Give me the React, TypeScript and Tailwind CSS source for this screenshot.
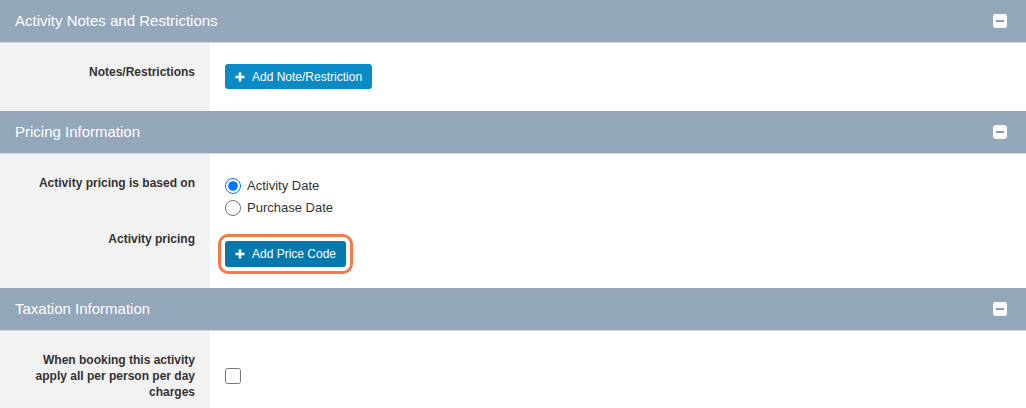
import React from "react";

function Plus() {
  return (
    <svg width="10" height="10" viewBox="0 0 10 10" className="shrink-0">
      <path d="M5 0.5v9M0.5 5h9" stroke="white" strokeWidth="2.6" />
    </svg>
  );
}

function Header({ title }: { title: string }) {
  return (
    <div className="flex h-[43px] items-center justify-between border-b border-[#d3d7dc] bg-[#94a6b9] pl-[15px] pr-[19px]">
      <span className="text-[15px] text-white">{title}</span>
      <span className="flex h-[14px] w-[14px] items-center justify-center rounded-[3px] bg-white">
        <span className="h-[2px] w-[8px] bg-[#8a9bb0]" />
      </span>
    </div>
  );
}

function Label({ children, className = "" }: { children: React.ReactNode; className?: string }) {
  return (
    <div className={`bg-[#f2f2f2] pr-[15px] text-right text-[12px] font-bold leading-[16px] text-[#333] ${className}`}>
      {children}
    </div>
  );
}

function Btn({ children, className = "" }: { children: React.ReactNode; className?: string }) {
  return (
    <button className={`flex items-center gap-[7px] rounded-[3px] pl-[10px] pr-[10px] text-[12px] text-white ${className}`}>
      <Plus />
      <span>{children}</span>
    </button>
  );
}

export default function App() {
  return (
    <div className="h-[408px] w-[1026px] overflow-hidden bg-white" style={{ fontFamily: '"Liberation Sans", Arial, sans-serif' }}>
      <Header title="Activity Notes and Restrictions" />
      <div className="grid grid-cols-[210px_1fr]">
        <Label className="pt-[21px]">Notes/Restrictions</Label>
        <div className="pb-[22px] pl-[15px] pt-[21px]">
          <Btn className="h-[25px] bg-[#0a8bc6]">Add Note/Restriction</Btn>
        </div>
      </div>

      <Header title="Pricing Information" />
      <div className="grid grid-cols-[210px_1fr]">
        <Label className="pt-[21px]">Activity pricing is based on</Label>
        <div className="flex flex-col pl-[15px] pt-[21px] text-[13px] text-[#333]">
          <label className="flex h-[22px] items-center gap-[6px]">
            <input type="radio" name="p" defaultChecked className="m-0 h-4 w-4 accent-[#0075ff]" />
            Activity Date
          </label>
          <label className="flex h-[22px] items-center gap-[6px]">
            <input type="radio" name="p" className="m-0 h-4 w-4" />
            Purchase Date
          </label>
        </div>
        <Label className="pt-[12px]">Activity pricing</Label>
        <div className="pb-[21px] pl-[15px] pt-[22px]">
          <Btn className="h-[26px] bg-[#0579ac] outline-[3px] outline-offset-[4px] outline-[#f47a4a] outline-solid">Add Price Code</Btn>
        </div>
      </div>

      <Header title="Taxation Information" />
      <div className="grid grid-cols-[210px_1fr]">
        <Label className="pb-[21px] pl-[20px] pt-[21px]">
          When booking this activity
          <br />
          apply all per person per day
          <br />
          charges
        </Label>
        <div className="flex items-center pl-[15px]">
          <input type="checkbox" className="m-0 h-4 w-4" />
        </div>
      </div>
    </div>
  );
}
